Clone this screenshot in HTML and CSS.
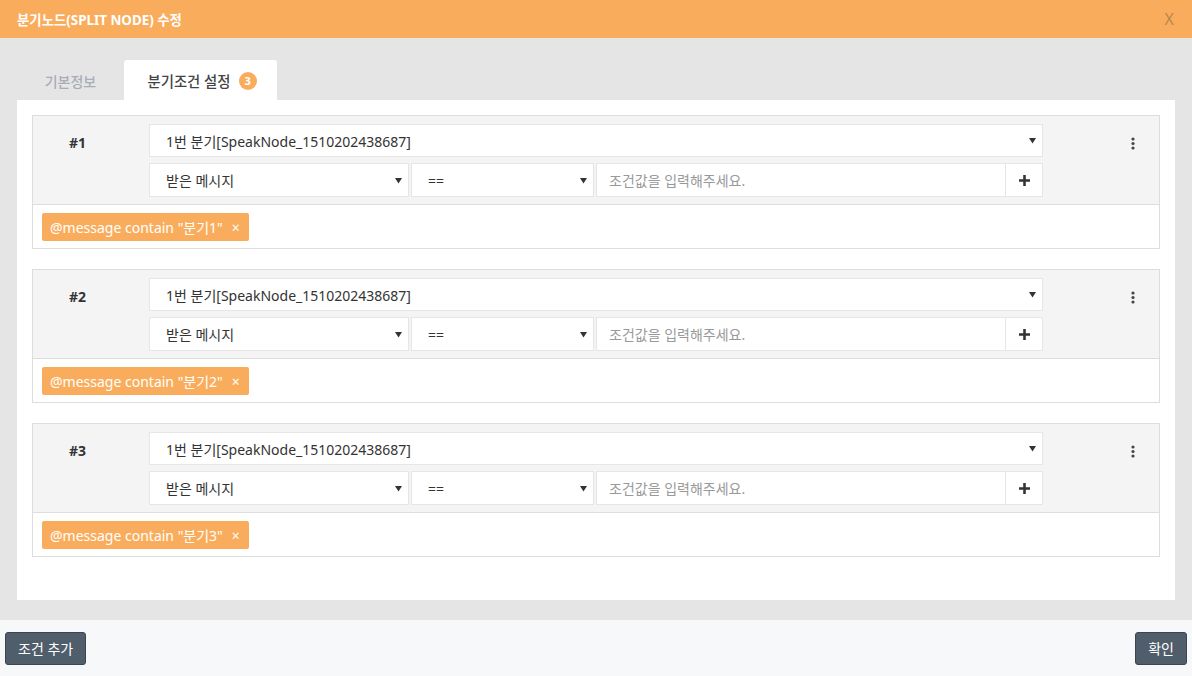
FILE: index.html
```
<!DOCTYPE html>
<html lang="ko">
<head>
    <meta charset="UTF-8">
    <title>분기노드(SPLIT NODE) 수정</title>
    <link rel="stylesheet" href="styles.css">
</head>
<body>

<div class="modal">
    <div class="modal-header">
        <h1>분기노드(SPLIT NODE) 수정</h1>
        <span class="close">X</span>
    </div>

    <div class="modal-body">
        <div class="tabs">
            <div class="tab">기본정보</div>
            <div class="tab active">분기조건 설정 <span class="badge">3</span></div>
        </div>

        <div class="panel">

            <div class="cond">
                <div class="cond-top">
                    <div class="cond-no">#1</div>
                    <div class="cond-fields">
                        <div class="field full">1번 분기[SpeakNode_1510202438687]<svg class="caret" viewBox="0 0 7 7"><path d="M0 1h7L3.5 6.5z"/></svg></div>
                        <div class="field-row">
                            <div class="field f-target">받은 메시지<svg class="caret" viewBox="0 0 7 7"><path d="M0 1h7L3.5 6.5z"/></svg></div>
                            <div class="field f-op">==<svg class="caret" viewBox="0 0 7 7"><path d="M0 1h7L3.5 6.5z"/></svg></div>
                            <div class="field f-value">조건값을 입력해주세요.</div>
                            <div class="field f-add"><svg viewBox="0 0 12 12"><path d="M4.6 0h2.8v4.6H12v2.8H7.4V12H4.6V7.4H0V4.6h4.6z"/></svg></div>
                        </div>
                    </div>
                    <div class="cond-menu">
                        <svg width="4" height="13" viewBox="0 0 4 13"><circle cx="2" cy="2" r="1.6"/><circle cx="2" cy="6.5" r="1.6"/><circle cx="2" cy="11" r="1.6"/></svg>
                    </div>
                </div>
                <div class="cond-tags">
                    <span class="tag">@message contain "분기1" <span class="tag-x">×</span></span>
                </div>
            </div>

            <div class="cond">
                <div class="cond-top">
                    <div class="cond-no">#2</div>
                    <div class="cond-fields">
                        <div class="field full">1번 분기[SpeakNode_1510202438687]<svg class="caret" viewBox="0 0 7 7"><path d="M0 1h7L3.5 6.5z"/></svg></div>
                        <div class="field-row">
                            <div class="field f-target">받은 메시지<svg class="caret" viewBox="0 0 7 7"><path d="M0 1h7L3.5 6.5z"/></svg></div>
                            <div class="field f-op">==<svg class="caret" viewBox="0 0 7 7"><path d="M0 1h7L3.5 6.5z"/></svg></div>
                            <div class="field f-value">조건값을 입력해주세요.</div>
                            <div class="field f-add"><svg viewBox="0 0 12 12"><path d="M4.6 0h2.8v4.6H12v2.8H7.4V12H4.6V7.4H0V4.6h4.6z"/></svg></div>
                        </div>
                    </div>
                    <div class="cond-menu">
                        <svg width="4" height="13" viewBox="0 0 4 13"><circle cx="2" cy="2" r="1.6"/><circle cx="2" cy="6.5" r="1.6"/><circle cx="2" cy="11" r="1.6"/></svg>
                    </div>
                </div>
                <div class="cond-tags">
                    <span class="tag">@message contain "분기2" <span class="tag-x">×</span></span>
                </div>
            </div>

            <div class="cond">
                <div class="cond-top">
                    <div class="cond-no">#3</div>
                    <div class="cond-fields">
                        <div class="field full">1번 분기[SpeakNode_1510202438687]<svg class="caret" viewBox="0 0 7 7"><path d="M0 1h7L3.5 6.5z"/></svg></div>
                        <div class="field-row">
                            <div class="field f-target">받은 메시지<svg class="caret" viewBox="0 0 7 7"><path d="M0 1h7L3.5 6.5z"/></svg></div>
                            <div class="field f-op">==<svg class="caret" viewBox="0 0 7 7"><path d="M0 1h7L3.5 6.5z"/></svg></div>
                            <div class="field f-value">조건값을 입력해주세요.</div>
                            <div class="field f-add"><svg viewBox="0 0 12 12"><path d="M4.6 0h2.8v4.6H12v2.8H7.4V12H4.6V7.4H0V4.6h4.6z"/></svg></div>
                        </div>
                    </div>
                    <div class="cond-menu">
                        <svg width="4" height="13" viewBox="0 0 4 13"><circle cx="2" cy="2" r="1.6"/><circle cx="2" cy="6.5" r="1.6"/><circle cx="2" cy="11" r="1.6"/></svg>
                    </div>
                </div>
                <div class="cond-tags">
                    <span class="tag">@message contain "분기3" <span class="tag-x">×</span></span>
                </div>
            </div>

        </div>
    </div>

    <div class="modal-footer">
        <button class="btn">조건 추가</button>
        <button class="btn">확인</button>
    </div>
</div>

</body>
</html>
```

FILE: styles.css
```
body {
    margin: 0;
    padding: 0;
    font-family: "Noto Sans", "Noto Sans CJK KR", sans-serif;
    color: #333;
    background-color: #fff;
}
.modal {
    width: 1192px;
    height: 676px;
    display: flex;
    flex-direction: column;
}
.modal-header {
    height: 38px;
    background-color: #f9ad5c;
    display: flex;
    align-items: center;
    justify-content: space-between;
    padding: 0 17px;
}
.modal-header h1 {
    margin: 0;
    font-size: 13.4px;
    font-weight: bold;
    color: #fff;
}
.close {
    color: #b8874f;
    font-size: 16px;
    margin-right: 1px;
}
.modal-body {
    background-color: #e5e5e5;
    padding: 22px 17px 20px;
}
.tabs {
    display: flex;
    height: 40px;
}
.tab {
    width: 107px;
    display: flex;
    align-items: center;
    justify-content: center;
    font-size: 14px;
    font-weight: 500;
    color: #a9adb5;
    padding-top: 1px;
}
.tab.active {
    width: 153px;
    box-sizing: border-box;
    padding-left: 3px;
    background-color: #fff;
    color: #444;
    border-radius: 3px 3px 0 0;
    gap: 8px;
    font-size: 14.4px;
}
.badge {
    display: inline-flex;
    align-items: center;
    justify-content: center;
    width: 18px;
    height: 18px;
    border-radius: 50%;
    background-color: #f9ad5c;
    color: #fff;
    font-size: 11px;
    font-weight: bold;
}
.panel {
    background-color: #fff;
    height: 500px;
    box-sizing: border-box;
    padding: 15px 15px;
}
.cond {
    border: 1px solid #ddd;
    margin-bottom: 20px;
}
.cond-top {
    display: flex;
    background-color: #f4f4f4;
    padding: 8px 0 7px;
    border-bottom: 1px solid #ddd;
}
.cond-no {
    width: 116px;
    box-sizing: border-box;
    padding: 2px 0 0 36px;
    height: 33px;
    line-height: 33px;
    font-size: 14px;
    font-weight: bold;
}
.cond-fields {
    width: 894px;
    display: flex;
    flex-direction: column;
    gap: 6px;
}
.field {
    height: 33px;
    box-sizing: border-box;
    border: 1px solid #e6e6e6;
    background-color: #fff;
    display: flex;
    align-items: center;
    justify-content: space-between;
    padding: 0 6px 0 16px;
    font-size: 14px;
}
.field-row {
    display: flex;
    height: 34px;
    gap: 2px;
}
.field-row .field {
    height: 34px;
}
.caret {
    width: 7px;
    height: 7px;
    fill: #333;
}
.f-target {
    width: 260px;
}
.f-op {
    width: 183px;
}
.f-value {
    width: 410px;
    color: #999;
    padding-left: 12px;
}
.f-add {
    width: 37px;
    margin-left: -2px;
    border-left: none;
    justify-content: center;
    padding: 0;
}
.f-add svg {
    width: 11px;
    height: 11px;
    fill: #333;
}
.cond-menu {
    flex: 1;
    display: flex;
    justify-content: flex-end;
    padding: 13px 24px 0 0;
    height: 20px;
}
.cond-menu svg {
    fill: #444;
}
.cond-tags {
    padding: 8px 9px 7px;
}
.tag {
    display: inline-flex;
    align-items: center;
    height: 28px;
    padding: 0 9px 0 8px;
    gap: 9px;
    background-color: #f9ad5c;
    color: #fff;
    font-size: 14px;
    border-radius: 2px;
}
.tag-x {
    font-size: 14px;
}
.modal-footer {
    flex: 1;
    background-color: #f7f8fa;
    display: flex;
    align-items: center;
    justify-content: space-between;
    padding: 0 5px;
}
.btn {
    height: 33px;
    padding: 0 12px;
    background-color: #505d6b;
    border: 1px solid #3a4550;
    border-radius: 3px;
    color: #fff;
    font-family: "Noto Sans", "Noto Sans CJK KR", sans-serif;
    font-size: 14px;
}
```
